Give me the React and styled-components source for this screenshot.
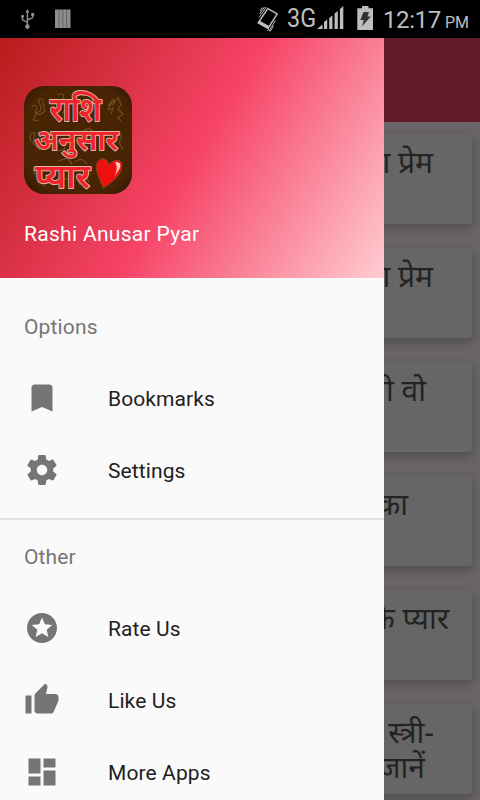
import React from 'react';
import styled, { createGlobalStyle } from 'styled-components';
import { MdBookmark, MdStars, MdThumbUp, MdDashboard } from 'react-icons/md';

const GlobalStyle = createGlobalStyle`
  * {
    box-sizing: border-box;
  }
  body {
    margin: 0;
    background: #000;
    font-family: Roboto, 'Noto Sans', sans-serif;
  }
`;

const Screen = styled.div`
  width: 480px;
  height: 800px;
  display: flex;
  flex-direction: column;
  overflow: hidden;
`;

const StatusBar = styled.header`
  height: 38px;
  flex: none;
  display: flex;
  align-items: center;
  background: #000;
  color: #bebebe;
  line-height: 1;
  white-space: nowrap;
  svg {
    display: block;
    flex: none;
  }
`;

const StatusSpacer = styled.div`
  flex: 1;
`;

const Network = styled.span`
  width: 32px;
  padding-bottom: 2px;
  font-size: 26px;
  transform: scaleX(0.9);
  transform-origin: left;
`;

const Clock = styled.span`
  width: 62px;
  padding-top: 2px;
  font-size: 24px;
  letter-spacing: -0.4px;
`;

const Meridiem = styled.span`
  width: 35px;
  padding-top: 7px;
  font-size: 16px;
`;

const Body = styled.div`
  flex: 1;
  display: grid;
  min-height: 0;
`;

const Page = styled.main`
  grid-area: 1 / 1;
  height: 762px;
  overflow: hidden;
  background: #696566;
`;

const Toolbar = styled.div`
  height: 84px;
  background: #611c2a;
`;

const CardList = styled.div`
  display: flex;
  flex-direction: column;
  gap: 24px;
  padding: 12px 8px;
`;

const Card = styled.div`
  height: 90px;
  flex: none;
  padding-top: 10px;
  border-radius: 3px;
  background: #666;
  box-shadow: 0 4px 10px 1px rgba(0, 0, 0, 0.22);
`;

const CardLine = styled.div`
  height: 35px;
  padding-right: ${(props) => props.$end}px;
  font-family: 'Noto Sans', 'Noto Sans Devanagari', sans-serif;
  font-size: 30px;
  line-height: 35px;
  text-align: right;
  white-space: nowrap;
  color: #232323;
`;

const Drawer = styled.aside`
  grid-area: 1 / 1;
  z-index: 1;
  width: 384px;
  height: 762px;
  overflow: hidden;
  background: #fafafa;
`;

const DrawerHeader = styled.div`
  height: 240px;
  padding: 48px 24px 0;
  background: linear-gradient(122deg, #b71c1c, #f64366 50%, #ffcdd2);
  svg {
    display: block;
  }
`;

const AppName = styled.div`
  margin-top: 24px;
  font-size: 21px;
  line-height: 32px;
  letter-spacing: 0.3px;
  color: #fff;
`;

const Group = styled.nav`
  padding: ${(props) => (props.$divided ? '0' : '12px 0')};
  border-top: ${(props) => (props.$divided ? '2px solid #e1e1e1' : 'none')};
`;

const GroupTitle = styled.div`
  height: 72px;
  padding: 1px 0 0 24px;
  font-size: 21px;
  line-height: 72px;
  letter-spacing: 0.15px;
  color: #757575;
`;

const Item = styled.div`
  display: flex;
  align-items: center;
  gap: 48px;
  height: 72px;
  padding-left: 24px;
  svg {
    width: 36px;
    height: 36px;
    color: #757575;
  }
`;

const Label = styled.span`
  padding-top: 2px;
  font-size: 21px;
  letter-spacing: 0.1px;
  color: #212121;
`;

const Gear = () => (
  <svg viewBox='0 0 24 24' fill='currentColor'>
    <path d='M19.43 12.98c.04-.32.07-.64.07-.98s-.03-.66-.07-.98l2.11-1.65c.19-.15.24-.42.12-.64l-2-3.46c-.12-.22-.39-.3-.61-.22l-2.49 1c-.52-.4-1.08-.73-1.69-.98l-.38-2.65C14.46 2.18 14.25 2 14 2h-4c-.25 0-.46.18-.49.42l-.38 2.65c-.61.25-1.17.59-1.69.98l-2.49-1c-.23-.09-.49 0-.61.22l-2 3.46c-.13.22-.07.49.12.64l2.11 1.65c-.04.32-.07.65-.07.98s.03.66.07.98l-2.11 1.65c-.19.15-.24.42-.12.64l2 3.46c.12.22.39.3.61.22l2.49-1c.52.4 1.08.73 1.69.98l.38 2.65c.03.24.24.42.49.42h4c.25 0 .46-.18.49-.42l.38-2.65c.61-.25 1.17-.59 1.69-.98l2.49 1c.23.09.49 0 .61-.22l2-3.46c.12-.22.07-.49-.12-.64l-2.11-1.65zM12 15.5c-1.93 0-3.5-1.57-3.5-3.5s1.57-3.5 3.5-3.5 3.5 1.57 3.5 3.5-1.57 3.5-3.5 3.5z' />
  </svg>
);

const cards = [
  [{ text: 'का प्रेम', end: 39 }],
  [{ text: 'का प्रेम', end: 39 }],
  [{ text: 'भी वो', end: 46 }],
  [{ text: 'का', end: 64 }],
  [{ text: 'के प्यार', end: 23 }],
  [
    { text: 'स्त्री-', end: 38 },
    { text: 'जानें', end: 47 },
  ],
];

const options = [
  { label: 'Bookmarks', Icon: MdBookmark },
  { label: 'Settings', Icon: Gear },
];

const others = [
  { label: 'Rate Us', Icon: MdStars },
  { label: 'Like Us', Icon: MdThumbUp },
  { label: 'More Apps', Icon: MdDashboard },
];

const LeftIcons = () => (
  <svg width='80' height='38' viewBox='0 0 80 38'>
    <path
      d='M27.4 11v15M27.4 22.5l-4.9-2.6v-3.5M27.4 20l5.3-2.4v-3'
      fill='none'
      stroke='#8e8e8e'
      strokeWidth='1.4'
    />
    <g fill='#8e8e8e'>
      <path d='M27.4 9l2 3.4h-4z' />
      <circle cx='27.4' cy='26.6' r='2.3' />
      <circle cx='22.5' cy='16.3' r='1.5' />
      <rect x='31.2' y='13' width='3' height='3' />
      <rect x='55' y='9.5' width='15.5' height='18.5' />
    </g>
    <path
      d='M59 9.5V28M62.8 9.5V28M66.6 9.5V28'
      stroke='#4f4f4f'
      strokeWidth='.7'
    />
  </svg>
);

const Vibrate = () => (
  <svg width='38' height='38' viewBox='0 0 38 38'>
    <path
      d='M18.8 8.6l9.4 5.2-9.2 14.5-9.8-5.4z'
      fill='none'
      stroke='#bebebe'
      strokeWidth='1.5'
      strokeLinejoin='round'
    />
    <path d='M8.6 22.6l1.6-2.2 10 5.5-1.5 3.1z' fill='#bebebe' />
    <path
      d='M17.5 7L10 17.5M15.5 7L10.500 14M13.5 7.5L11 11M26.5 20.5L20 31M24.500 26L21 31.500M18.500 31l1.500-2'
      stroke='#bebebe'
      strokeWidth='1'
    />
  </svg>
);

const Signal = () => (
  <svg width='37' height='38' viewBox='0 0 37 38' overflow='visible'>
    <path
      fill='#bebebe'
      d='M-2 29l5.500-4.500V29zM5 22l3.200-2.500V29H5zM10.200 18l3.200-2.500V29h-3.200zM15.600 13.500l3.200-2.500V29h-3.200zM20.900 9l3.400-3v23h-3.400z'
    />
  </svg>
);

const Battery = () => (
  <svg width='27' height='38' viewBox='0 0 27 38'>
    <path d='M6 6h6.500v2.200H17V30H1.300V8.200H6z' fill='#bebebe' />
    <path d='M7.500 12h5.500l-1.500 4.500h3.300L6 26.500 7.800 20H4.300z' fill='#333' />
  </svg>
);

const AppLogo = () => (
  <svg width='108' height='108' viewBox='0 0 108 108'>
    <defs>
      <radialGradient id='logoBg' cx='50%' cy='50%' r='72%'>
        <stop offset='0.75' stopColor='#482304' />
        <stop offset='1' stopColor='#2c1502' />
      </radialGradient>
    </defs>
    <rect width='108' height='108' rx='20' fill='url(#logoBg)' />
    <g fill='none' stroke='#6d5020' strokeWidth='1.2' strokeLinejoin='round'>
      <path d='M8 21q4-4 5 1l-2 5q7-1 6-6l-3-7q6-3 5 3l2 8q-5 5-9 3l-3 6 6 1M84 20l6-7-1 6 5-8 3 8-3 4 5 5-5 4 3 3M88 16l-4 8 5-2-2 6' />
      <path d='M34 9q7-4 5 5l4 9-5 4M7 55q-3-9 4-8l-2 10 7 7M36 49l5-4 4 5M33 65l8-2-2-6 5-3M58 46q9-8 14 4M92 46q9 1 3 10l4 8M57 62l5 3 2-6' />
      <path d='M10 81q-2 9 6 7l-2 8 8 4M34 75l9-3 5 6M33 97q7-7 15-2M51 76q7-6 12 2M55 98l8-5 2 3M78 72l5 5' />
    </g>
    <g
      fontFamily="'Noto Sans', 'Noto Sans Devanagari', sans-serif"
      fontWeight='600'
      fill='#f2222a'
      stroke='#dcb9a6'
      strokeWidth='1.8'
      paintOrder='stroke'
      strokeLinejoin='round'
      textAnchor='middle'
    >
      <text transform='translate(51.5 34.5) scale(.91 1)' fontSize='33'>
        राशि
      </text>
      <text transform='translate(52.5 64) scale(1.02 1)' fontSize='29'>
        अनुसार
      </text>
      <text transform='translate(38.5 102) scale(1.02 1)' fontSize='33'>
        प्यार
      </text>
    </g>
    <path
      d='M79 102C77 95 70 84 73 77 76 71 84 72 85 79 88 75 94 72 97 76 100 82 96 92 79 102z'
      fill='#ee1010'
      stroke='#77541c'
      strokeWidth='.8'
    />
    <path d='M91 76q7-1 5 6l-6 9q5-9 1-15z' fill='#ffc9c0' />
  </svg>
);

const App = () => {
  return (
    <Screen>
      <GlobalStyle />
      <StatusBar>
        <LeftIcons />
        <StatusSpacer />
        <Vibrate />
        <Network>3G</Network>
        <Signal />
        <Battery />
        <Clock>12:17</Clock>
        <Meridiem>PM</Meridiem>
      </StatusBar>
      <Body>
        <Page>
          <Toolbar />
          <CardList>
            {cards.map((lines, i) => (
              <Card key={i}>
                {lines.map((line) => (
                  <CardLine key={line.text} $end={line.end}>
                    {line.text}
                  </CardLine>
                ))}
              </Card>
            ))}
          </CardList>
        </Page>
        <Drawer>
          <DrawerHeader>
            <AppLogo />
            <AppName>Rashi Anusar Pyar</AppName>
          </DrawerHeader>
          <Group>
            <GroupTitle>Options</GroupTitle>
            {options.map(({ label, Icon }) => (
              <Item key={label}>
                <Icon />
                <Label>{label}</Label>
              </Item>
            ))}
          </Group>
          <Group $divided>
            <GroupTitle>Other</GroupTitle>
            {others.map(({ label, Icon }) => (
              <Item key={label}>
                <Icon />
                <Label>{label}</Label>
              </Item>
            ))}
          </Group>
        </Drawer>
      </Body>
    </Screen>
  );
};

export default App;
